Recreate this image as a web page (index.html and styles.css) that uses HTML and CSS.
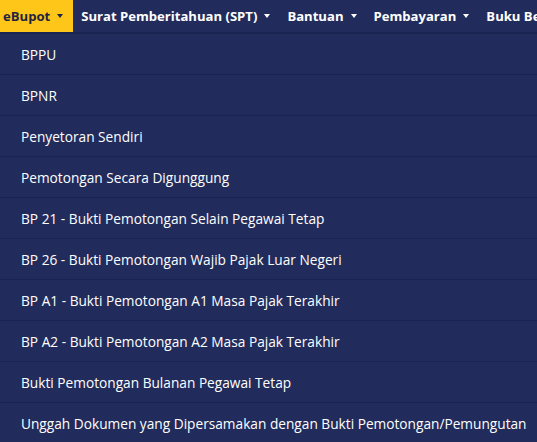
FILE: index.html
```html
<!DOCTYPE html>
<html lang="id">
<head>
<meta charset="utf-8">
<title>eBupot</title>
<link rel="stylesheet" href="styles.css">
</head>
<body>
<nav class="navbar">
  <div class="nav-item active"><span>eBupot</span><span class="caret"></span></div>
  <div class="nav-item"><span>Surat Pemberitahuan (SPT)</span><span class="caret"></span></div>
  <div class="nav-item"><span>Bantuan</span><span class="caret"></span></div>
  <div class="nav-item"><span>Pembayaran</span><span class="caret"></span></div>
  <div class="nav-item"><span>Buku Besar</span><span class="caret"></span></div>
</nav>
<ul class="menu">
  <li>BPPU</li>
  <li>BPNR</li>
  <li>Penyetoran Sendiri</li>
  <li>Pemotongan Secara Digunggung</li>
  <li>BP 21 - Bukti Pemotongan Selain Pegawai Tetap</li>
  <li>BP 26 - Bukti Pemotongan Wajib Pajak Luar Negeri</li>
  <li>BP A1 - Bukti Pemotongan A1 Masa Pajak Terakhir</li>
  <li>BP A2 - Bukti Pemotongan A2 Masa Pajak Terakhir</li>
  <li>Bukti Pemotongan Bulanan Pegawai Tetap</li>
  <li>Unggah Dokumen yang Dipersamakan dengan Bukti Pemotongan/Pemungutan</li>
</ul>
</body>
</html>
```
FILE: styles.css
```css
html, body {
  margin: 0;
  padding: 0;
  background: #222c5c;
  overflow: hidden;
}
body {
  font-family: "Open Sans", "Noto Sans", sans-serif;
  color: #ffffff;
  width: 537px;
  height: 442px;
}
.navbar {
  display: flex;
  height: 32px;
  border-bottom: 2px solid #1b2450;
  white-space: nowrap;
  overflow: hidden;
}
.nav-item {
  display: flex;
  align-items: center;
  flex: none;
  gap: 7px;
  padding: 0 9px 0 8px;
  font-weight: 700;
  font-size: 13.1px;
}
.nav-item.active {
  background: #ffc61a;
  color: #1f2540;
  padding-left: 3px;
  padding-right: 10px;
}
.caret {
  width: 0;
  height: 0;
  border-left: 3.5px solid transparent;
  border-right: 3.5px solid transparent;
  border-top: 4.5px solid currentColor;
}
.menu {
  list-style: none;
  margin: 0;
  padding: 0;
}
.menu li {
  height: 40px;
  line-height: 41px;
  padding-left: 21px;
  font-size: 13.7px;
  border-bottom: 1px solid #1b2450;
  white-space: nowrap;
}
```
